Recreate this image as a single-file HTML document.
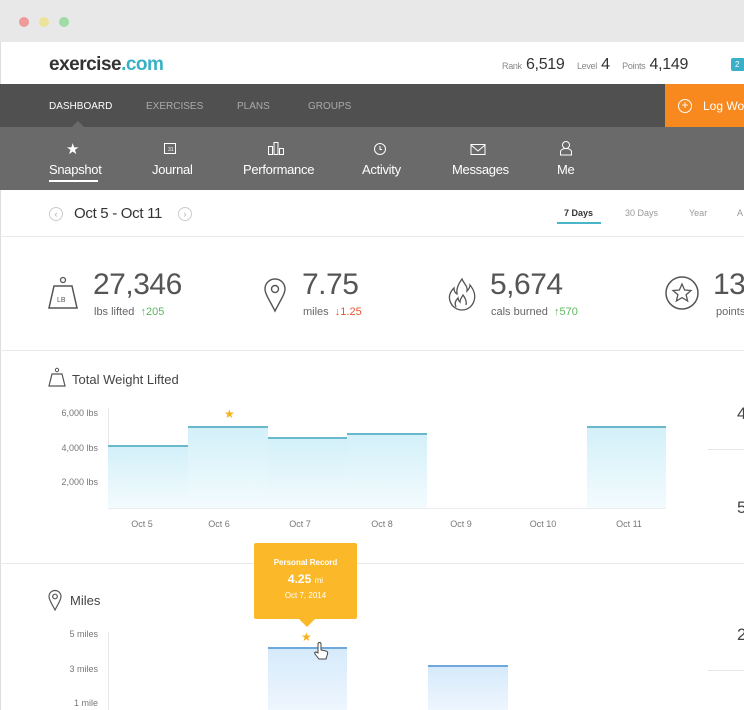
<!DOCTYPE html>
<html><head><meta charset="utf-8"><style>
*{margin:0;padding:0;box-sizing:border-box}
body{width:744px;height:710px;overflow:hidden;background:#fff;font-family:"Liberation Sans",sans-serif;position:relative;color:#444}
.a{position:absolute;white-space:nowrap}
.tb{left:0;top:0;width:744px;height:42px;background:#e8e8e8}
.dot{width:10px;height:10px;border-radius:50%;top:17px}
.nav{top:84px;left:0;width:744px;height:43px;background:#505050}
.sub{top:127px;left:0;width:744px;height:63px;background:#6a6a6a}
.nl{font-size:10px;color:#aaa;top:101px}
.sl{font-size:13px;color:#fff;top:162px;letter-spacing:-0.3px}
.yl{font-size:9px;color:#777;text-align:right;width:60px;left:38px}
.xl{font-size:9px;color:#777;top:519px;width:80px;text-align:center}
.bar{background:linear-gradient(#d3f0f9,#f3fbfe);border-top:2px solid #6ab8cc;bottom:202px}
.bar2{background:linear-gradient(#d6eafb,#eef6fe);border-top:2px solid #6fa8dc}
.big{font-size:30px;color:#555;letter-spacing:-0.5px}
</style></head><body>
<div class="a tb"></div>
<div class="a dot" style="left:19px;background:#ef9a9a"></div>
<div class="a dot" style="left:39px;background:#ece39a"></div>
<div class="a dot" style="left:59px;background:#9fdca8"></div>
<div class="a" style="left:0;top:42px;width:1px;height:668px;background:#ddd"></div>
<div class="a" style="left:49px;top:54px;font-size:19px;font-weight:bold;color:#333;letter-spacing:-0.5px">exercise<span style="color:#3ab0c8">.com</span></div>
<div class="a" style="left:502px;top:56px;font-size:16px;color:#333;letter-spacing:-0.3px"><span style="font-size:9px;color:#888">Rank</span> 6,519 &nbsp; <span style="font-size:9px;color:#888">Level</span> 4 &nbsp; <span style="font-size:9px;color:#888">Points</span> 4,149</div>
<div class="a" style="left:731px;top:58px;width:14px;height:13px;background:#3ab0c8;border-radius:2px;color:#fff;font-size:8px;padding-left:4px;line-height:13px">2</div>
<div class="a nav"></div>
<div class="a nl" style="left:49px;color:#fff">DASHBOARD</div>
<div class="a nl" style="left:146px">EXERCISES</div>
<div class="a nl" style="left:237px">PLANS</div>
<div class="a nl" style="left:308px">GROUPS</div>
<div class="a" style="left:72px;top:121px;width:0;height:0;border:6px solid transparent;border-bottom-color:#6a6a6a;border-top:0"></div>
<div class="a" style="left:665px;top:84px;width:79px;height:43px;background:#f7891f"></div>
<div class="a" style="left:678px;top:99px;width:14px;height:14px;border:1.5px solid #fff;border-radius:50%;color:#fff;font-size:12px;line-height:11px;text-align:center">+</div>
<div class="a" style="left:703px;top:99px;color:#fff;font-size:12px">Log Wor</div>
<div class="a sub"></div>
<div class="a" style="left:66px;top:140px;color:#fff;font-size:15px">★</div>
<svg class="a" style="left:163px;top:141px" width="14" height="14"><rect x="1.5" y="2.5" width="11" height="10" fill="none" stroke="#fff"/><text x="5" y="10" font-size="5" fill="#fff">31</text></svg>
<svg class="a" style="left:267px;top:141px" width="18" height="14"><rect x="1.5" y="5.5" width="4" height="8" fill="none" stroke="#fff"/><rect x="7" y="1.5" width="4" height="12" fill="none" stroke="#fff"/><rect x="12.5" y="7.5" width="4" height="6" fill="none" stroke="#fff"/></svg>
<svg class="a" style="left:373px;top:142px" width="14" height="14"><circle cx="7" cy="7" r="5.5" fill="none" stroke="#fff"/><path d="M7 4v3.5h2" fill="none" stroke="#fff"/></svg>
<svg class="a" style="left:470px;top:143px" width="16" height="12"><rect x="1" y="1.5" width="14" height="10" fill="none" stroke="#fff"/><path d="M1 2l7 6 7-6" fill="none" stroke="#fff"/></svg>
<svg class="a" style="left:559px;top:140px" width="14" height="16"><circle cx="7" cy="5" r="3.5" fill="none" stroke="#fff"/><path d="M1.5 15v-3c0-2 2-3.5 5.5-3.5s5.5 1.5 5.5 3.5v3z" fill="none" stroke="#fff"/></svg>
<div class="a sl" style="left:49px">Snapshot</div>
<div class="a" style="left:49px;top:180px;width:49px;height:2px;background:#fff"></div>
<div class="a sl" style="left:152px">Journal</div>
<div class="a sl" style="left:243px">Performance</div>
<div class="a sl" style="left:362px">Activity</div>
<div class="a sl" style="left:452px">Messages</div>
<div class="a sl" style="left:557px">Me</div>
<div class="a" style="left:49px;top:207px;width:14px;height:14px;border:1px solid #ccc;border-radius:50%;font-size:9px;color:#aaa;text-align:center;line-height:12px">‹</div>
<div class="a" style="left:74px;top:205px;font-size:15px;color:#333;letter-spacing:-0.3px">Oct 5 - Oct 11</div>
<div class="a" style="left:178px;top:207px;width:14px;height:14px;border:1px solid #ccc;border-radius:50%;font-size:9px;color:#aaa;text-align:center;line-height:12px">›</div>
<div class="a" style="left:564px;top:208px;font-size:9px;color:#333;font-weight:bold">7 Days</div>
<div class="a" style="left:557px;top:222px;width:44px;height:2px;background:#4ab4c8"></div>
<div class="a" style="left:625px;top:208px;font-size:9px;color:#999">30 Days</div>
<div class="a" style="left:689px;top:208px;font-size:9px;color:#999">Year</div>
<div class="a" style="left:737px;top:208px;font-size:9px;color:#999">A</div>
<div class="a" style="left:0;top:236px;width:744px;height:1px;background:#e8e8e8"></div>
<svg class="a" style="left:46px;top:275px" width="34" height="36"><circle cx="17" cy="5" r="2.5" fill="none" stroke="#555" stroke-width="1.3"/><path d="M8 11h18l5 22H3z" fill="none" stroke="#555" stroke-width="1.5"/><text x="11" y="27" font-size="7" fill="#555" font-family="Liberation Sans">LB</text></svg>
<div class="a big" style="left:93px;top:268px">27,346</div>
<div class="a" style="left:94px;top:306px;font-size:11px;color:#666">lbs lifted &nbsp;<span style="color:#5cb85c">↑205</span></div>
<svg class="a" style="left:262px;top:277px" width="26" height="36"><path d="M13 34C8 24 3 17 3 12a10 10 0 0 1 20 0c0 5-5 12-10 22z" fill="none" stroke="#555" stroke-width="1.4"/><circle cx="13" cy="12" r="3.5" fill="none" stroke="#555" stroke-width="1.4"/></svg>
<div class="a big" style="left:302px;top:268px">7.75</div>
<div class="a" style="left:303px;top:306px;font-size:11px;color:#666">miles &nbsp;<span style="color:#e8552f">↓1.25</span></div>
<svg class="a" style="left:446px;top:277px" width="32" height="36"><path d="M16 2c2 5 6 7 5 12 2-2 3-4 3-6 4 5 6 10 4 16-2 6-7 9-12 9S6 30 4 24c-2-6 1-10 4-13 0 3 1 5 3 6-1-6 2-11 5-15z M10 30c-2-4 0-7 2-9 0 2 1 3 2 4 0-3 2-5 3-7 2 3 4 6 3 10" fill="none" stroke="#555" stroke-width="1.3"/></svg>
<div class="a big" style="left:490px;top:268px">5,674</div>
<div class="a" style="left:491px;top:306px;font-size:11px;color:#666">cals burned &nbsp;<span style="color:#5cb85c">↑570</span></div>
<svg class="a" style="left:664px;top:275px" width="36" height="36"><circle cx="18" cy="18" r="16" fill="none" stroke="#555" stroke-width="1.5"/><path d="M18 9l2.6 6 6.4.5-4.9 4.2 1.5 6.3L18 22.6 12.4 26l1.5-6.3L9 15.5l6.4-.5z" fill="none" stroke="#555" stroke-width="1.3"/></svg>
<div class="a big" style="left:713px;top:268px">13</div>
<div class="a" style="left:716px;top:306px;font-size:11px;color:#666">points</div>
<div class="a" style="left:0;top:350px;width:744px;height:1px;background:#e8e8e8"></div>
<svg class="a" style="left:47px;top:367px" width="20" height="20"><circle cx="10" cy="3" r="1.7" fill="none" stroke="#555"/><path d="M5 7h10l3 12H2z" fill="none" stroke="#555" stroke-width="1.2"/></svg>
<div class="a" style="left:72px;top:372px;font-size:13px;color:#444">Total Weight Lifted</div>
<div class="a yl" style="top:408px">6,000 lbs</div>
<div class="a yl" style="top:443px">4,000 lbs</div>
<div class="a yl" style="top:477px">2,000 lbs</div>
<div class="a" style="left:108px;top:408px;width:1px;height:100px;background:#e6e6e6"></div>
<div class="a bar" style="left:108px;width:80px;top:445px"></div>
<div class="a bar" style="left:188px;width:80px;top:426px"></div>
<div class="a bar" style="left:268px;width:79px;top:437px"></div>
<div class="a bar" style="left:347px;width:80px;top:433px"></div>
<div class="a bar" style="left:587px;width:79px;top:426px"></div>
<div class="a" style="left:108px;top:508px;width:558px;height:1px;background:#e8eef0"></div>
<div class="a" style="left:224px;top:407px;color:#f5b21b;font-size:12px">★</div>
<div class="a xl" style="left:102px">Oct 5</div>
<div class="a xl" style="left:179px">Oct 6</div>
<div class="a xl" style="left:260px">Oct 7</div>
<div class="a xl" style="left:342px">Oct 8</div>
<div class="a xl" style="left:421px">Oct 9</div>
<div class="a xl" style="left:503px">Oct 10</div>
<div class="a xl" style="left:589px">Oct 11</div>
<div class="a" style="left:708px;top:449px;width:36px;height:1px;background:#e6e6e6"></div>
<div class="a" style="left:737px;top:404px;font-size:17px;color:#444">4</div>
<div class="a" style="left:737px;top:498px;font-size:17px;color:#444">5</div>
<div class="a" style="left:0;top:563px;width:744px;height:1px;background:#e8e8e8"></div>
<svg class="a" style="left:47px;top:589px" width="16" height="22"><path d="M8 21C5 15 2 11 2 7.5a6 6 0 0 1 12 0C14 11 11 15 8 21z" fill="none" stroke="#555" stroke-width="1.2"/><circle cx="8" cy="7.5" r="2.3" fill="none" stroke="#555" stroke-width="1.2"/></svg>
<div class="a" style="left:70px;top:593px;font-size:13px;color:#444">Miles</div>
<div class="a yl" style="top:629px">5 miles</div>
<div class="a yl" style="top:664px">3 miles</div>
<div class="a yl" style="top:698px">1 mile</div>
<div class="a" style="left:108px;top:632px;width:1px;height:78px;background:#e6e6e6"></div>
<div class="a bar2" style="left:268px;width:79px;top:647px;height:63px"></div>
<div class="a bar2" style="left:428px;width:80px;top:665px;height:45px"></div>
<div class="a" style="left:254px;top:543px;width:103px;height:76px;background:#fbb829;border-radius:2px;color:#fff;text-align:center">
<div style="font-size:8px;font-weight:bold;margin-top:15px">Personal Record</div>
<div style="font-size:12px;font-weight:bold;margin-top:5px">4.25 <span style="font-size:8px;font-weight:normal">mi</span></div>
<div style="font-size:8px;margin-top:5px">Oct 7, 2014</div></div>
<div class="a" style="left:299px;top:619px;width:0;height:0;border:8px solid transparent;border-top:8px solid #fbb829;border-bottom:0"></div>
<div class="a" style="left:301px;top:630px;color:#f5b21b;font-size:12px">★</div>
<svg class="a" style="left:313px;top:641px" width="16" height="20"><path d="M5 12V3a1.5 1.5 0 0 1 3 0v6l5 1c1.5.5 2 1.5 1.5 3L13 18H6l-4-5c-1-1.5.5-2.5 2-1.5z" fill="#fff" stroke="#444" stroke-width="1"/></svg>
<div class="a" style="left:708px;top:670px;width:36px;height:1px;background:#e6e6e6"></div>
<div class="a" style="left:737px;top:625px;font-size:17px;color:#444">2</div>
</body></html>
